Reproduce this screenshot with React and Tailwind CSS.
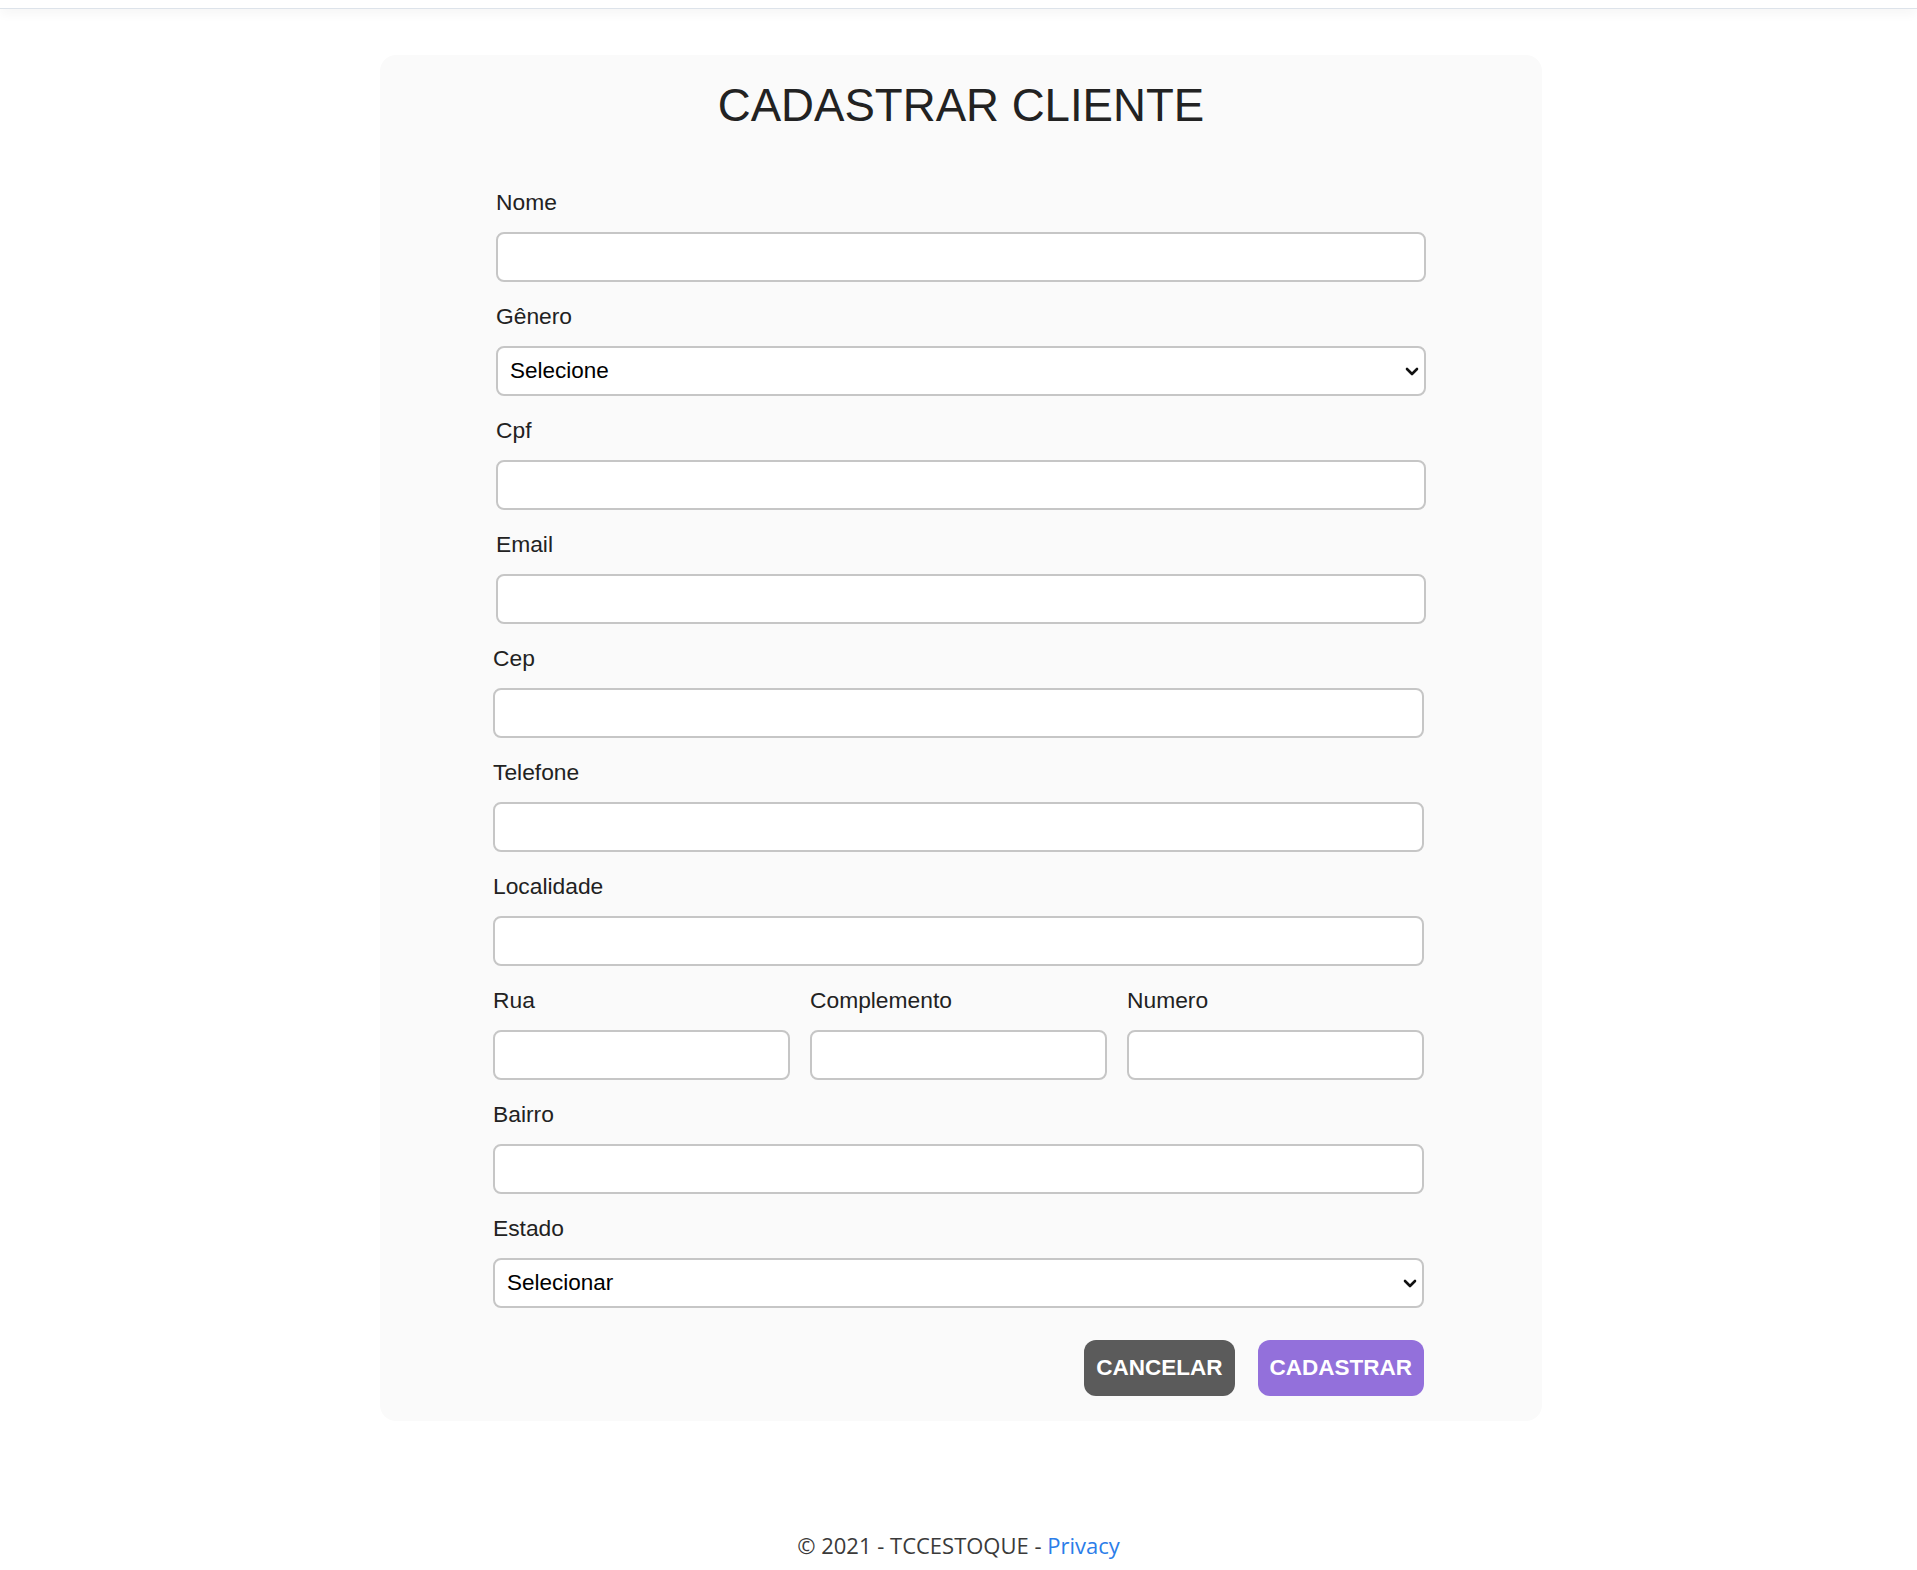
import { useState } from 'react';

const fieldsTop = ['Nome', 'Gênero', 'Cpf', 'Email'];

function Label({ children }) {
    return (
        <label className="block h-[30px] leading-[30px] mb-[15px] text-[22.8px] text-[#222]">
            {children}
        </label>
    );
}

function TextInput() {
    return (
        <input
            type="text"
            className="block w-full h-[50px] px-[12px] bg-white border-2 border-[#c6c6c6] rounded-[8px] text-[22.5px] outline-none"
        />
    );
}

function Select({ placeholder }) {
    return (
        <div className="relative">
            <select className="block w-full h-[50px] pl-[12px] pr-[30px] bg-white border-2 border-[#c6c6c6] rounded-[8px] text-[22.5px] text-black appearance-none outline-none">
                <option>{placeholder}</option>
            </select>
            <svg
                className="absolute right-[7px] top-[21px] pointer-events-none"
                width="14"
                height="9"
                viewBox="0 0 14 9"
                fill="none"
            >
                <path d="M2 2 L7 7 L12 2" stroke="#111" strokeWidth="2.6" strokeLinecap="round" strokeLinejoin="round" />
            </svg>
        </div>
    );
}

function Field({ label, select, placeholder }) {
    return (
        <div>
            <Label>{label}</Label>
            {select ? <Select placeholder={placeholder} /> : <TextInput />}
        </div>
    );
}

export default function App() {
    const [sent] = useState(false);

    return (
        <div className="min-h-screen bg-white font-['Liberation_Sans',Arial,sans-serif]">
            <div className="h-[9px] bg-white border-b border-[#dde3ea] shadow-[0_4px_12px_rgba(0,0,0,0.05)]" />

            <main className="pt-[46px] pl-[5px]">
                <div className="mx-auto w-[1162px] bg-[#fafafa] rounded-[16px] pt-[24px] pb-[25px] pl-[113px] pr-[118px]">
                    <h1 className="h-[54px] leading-[54px] text-center text-[45.6px] text-[#222] -ml-[113px] -mr-[118px] mb-[54px]">
                        CADASTRAR CLIENTE
                    </h1>

                    <form className="flex flex-col gap-[19px]" onSubmit={(e) => e.preventDefault()}>
                        <div className="flex flex-col gap-[19px] ml-[3px] -mr-[2px]">
                            {fieldsTop.map((f) =>
                                f === 'Gênero' ? (
                                    <Field key={f} label={f} select placeholder="Selecione" />
                                ) : (
                                    <Field key={f} label={f} />
                                )
                            )}
                        </div>

                        <Field label="Cep" />
                        <Field label="Telefone" />
                        <Field label="Localidade" />

                        <div className="grid grid-cols-3 gap-x-[20px]">
                            <Field label="Rua" />
                            <Field label="Complemento" />
                            <Field label="Numero" />
                        </div>

                        <Field label="Bairro" />
                        <Field label="Estado" select placeholder="Selecionar" />

                        <div className="flex justify-end gap-[23px] mt-[13px]">
                            <button
                                type="button"
                                className="h-[56px] px-[12px] rounded-[12px] bg-[#5b5b5b] text-white font-bold text-[22.5px]"
                            >
                                CANCELAR
                            </button>
                            <button
                                type="submit"
                                className="h-[56px] px-[12px] rounded-[12px] bg-[#9370db] text-white font-bold text-[22.5px]"
                            >
                                {sent ? 'CADASTRAR' : 'CADASTRAR'}
                            </button>
                        </div>
                    </form>
                </div>
            </main>

            <footer className="mt-[109px] h-[30px] leading-[30px] text-center text-[22px] text-[#3a3a3a] font-['Open_Sans',sans-serif]">
                © 2021 - TCCESTOQUE - <a href="#" className="text-[#2b7de9]">Privacy</a>
            </footer>
        </div>
    );
}
